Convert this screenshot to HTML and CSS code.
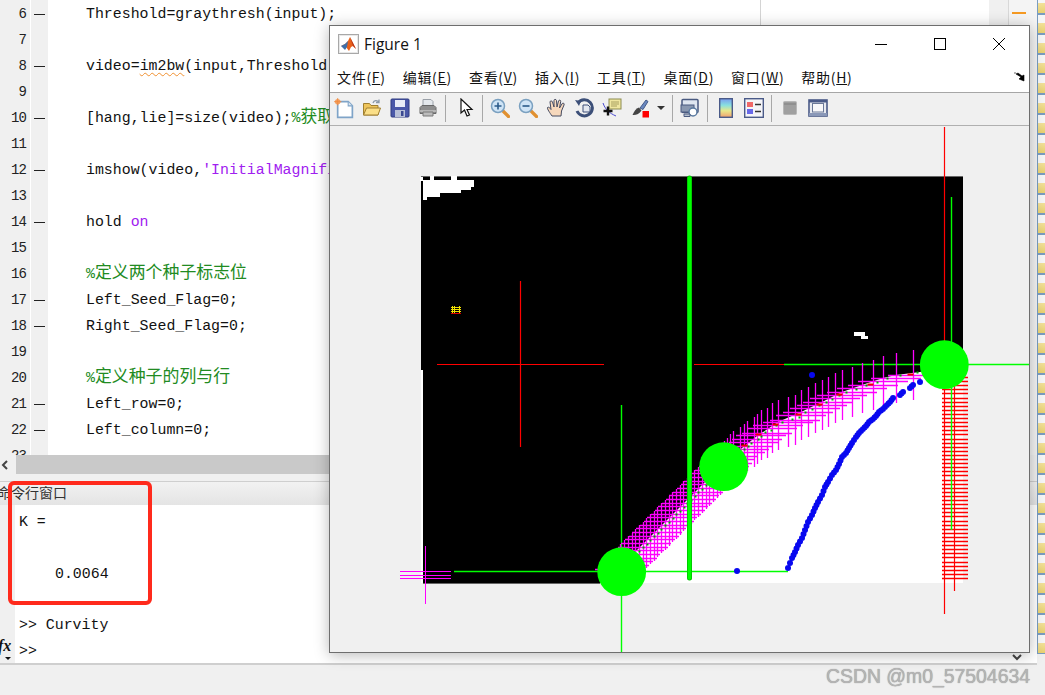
FILE: index.html
```html
<!DOCTYPE html>
<html lang="zh">
<head>
<meta charset="utf-8">
<title>Figure 1</title>
<link rel="stylesheet" href="styles.css">
</head>
<body>
<div class="desktop">
  <div class="workspace">
    <div class="editor">
      <div class="code">
        <div class="line"><span class="num">6</span><span class="mark on"></span><span class="src">Threshold=graythresh(input);</span></div>
        <div class="line"><span class="num">7</span><span class="mark"></span><span class="src"></span></div>
        <div class="line"><span class="num">8</span><span class="mark on"></span><span class="src">video=<span class="warn">im2bw</span>(input,Threshold);</span></div>
        <div class="line"><span class="num">9</span><span class="mark"></span><span class="src"></span></div>
        <div class="line"><span class="num">10</span><span class="mark on"></span><span class="src">[hang,lie]=size(video);<span class="cm">%<span class="cjk">获取</span></span></span></div>
        <div class="line"><span class="num">11</span><span class="mark"></span><span class="src"></span></div>
        <div class="line"><span class="num">12</span><span class="mark on"></span><span class="src">imshow(video,<span class="str">'InitialMagnification'</span>);</span></div>
        <div class="line"><span class="num">13</span><span class="mark"></span><span class="src"></span></div>
        <div class="line"><span class="num">14</span><span class="mark on"></span><span class="src">hold <span class="str">on</span></span></div>
        <div class="line"><span class="num">15</span><span class="mark"></span><span class="src"></span></div>
        <div class="line"><span class="num">16</span><span class="mark"></span><span class="src cm">%<span class="cjk">定义两个种子标志位</span></span></div>
        <div class="line"><span class="num">17</span><span class="mark on"></span><span class="src">Left_Seed_Flag=0;</span></div>
        <div class="line"><span class="num">18</span><span class="mark on"></span><span class="src">Right_Seed_Flag=0;</span></div>
        <div class="line"><span class="num">19</span><span class="mark"></span><span class="src"></span></div>
        <div class="line"><span class="num">20</span><span class="mark"></span><span class="src cm">%<span class="cjk">定义种子的列与行</span></span></div>
        <div class="line"><span class="num">21</span><span class="mark on"></span><span class="src">Left_row=0;</span></div>
        <div class="line"><span class="num">22</span><span class="mark on"></span><span class="src">Left_column=0;</span></div>
        <div class="line"><span class="num">23</span><span class="mark"></span><span class="src"></span></div>
      </div>
      <div class="split"></div>
      <div class="overview"></div>
      <div class="overview2"></div>
    </div>
    <div class="hscroll"><span class="arrow-cell"><svg width="10" height="12" viewBox="0 0 10 12"><path d="M7 2 3 6l4 4" fill="none" stroke="#444" stroke-width="2"/></svg></span><span class="thumb"></span></div>
    <div class="cmd-title"><span class="cmd-name">命令行窗口</span></div>
    <div class="cmd-body">
      <div class="fx-col"><span class="fx">fx</span><span class="fx-caret"></span></div>
      <div class="cmd-text">
        <div class="cmd-line">K =</div>
        <div class="cmd-line"></div>
        <div class="cmd-line indent">0.0064</div>
        <div class="cmd-line"></div>
        <div class="cmd-line">&gt;&gt; Curvity</div>
        <div class="cmd-line">&gt;&gt;</div>
      </div>
    </div>
    <div class="status"></div>
  </div>

  <div class="file-strip">
    <i></i><i></i><i></i><i></i><i></i><i></i><i></i><i></i><i></i><i></i><i></i><i></i><i></i><i></i><i></i><i></i><i></i><i></i><i></i><i></i><i></i><i></i><i></i><i></i><i></i><i></i><i></i><i></i><i></i><i></i><i></i><i></i><i></i>
  </div>

  <svg class="chevron" width="10" height="7" viewBox="0 0 10 7"><path d="M1 1l4 4 4-4" fill="none" stroke="#444" stroke-width="2"/></svg>

  <div class="callout"></div>

  <section class="figure">
    <header class="titlebar">
      <svg class="app-icon" width="21" height="20" viewBox="0 0 21 20">
        <rect x=".5" y=".5" width="20" height="19" fill="#e8e8e8" stroke="#a8a8a8"/>
        <rect x="2" y="2" width="17" height="16" fill="#fff"/>
        <path d="M3 12l4-2 3-3 2-4 3 6 3 6-3-3-2 1-2 4-3-4z" fill="#e8601a"/>
        <path d="M3 12l4-2 3-3-1 6-2 3z" fill="#3f6fa8"/>
        <path d="M12 3l3 6 3 6-3-3z" fill="#b8321a"/>
      </svg>
      <span class="title-text">Figure 1</span>
      <div class="win-controls">
        <svg width="14" height="14" viewBox="0 0 14 14"><path d="M1 7.500h12" stroke="#000"/></svg>
        <svg width="14" height="14" viewBox="0 0 14 14"><rect x="1.500" y="1.500" width="11" height="11" fill="none" stroke="#000"/></svg>
        <svg width="14" height="14" viewBox="0 0 14 14"><path d="M1 1l12 12M13 1 1 13" stroke="#000" fill="none"/></svg>
      </div>
    </header>
    <nav class="menubar">
      <span class="menu">文件(<u>F</u>)</span>
      <span class="menu">编辑(<u>E</u>)</span>
      <span class="menu">查看(<u>V</u>)</span>
      <span class="menu">插入(<u>I</u>)</span>
      <span class="menu">工具(<u>T</u>)</span>
      <span class="menu">桌面(<u>D</u>)</span>
      <span class="menu">窗口(<u>W</u>)</span>
      <span class="menu">帮助(<u>H</u>)</span>
      <svg class="dock" width="12" height="10" viewBox="0 0 12 10"><path d="M1 1h2M3 2l5 3-2 2 5 2V3L9 4 5 1z" fill="#000" stroke="#000" stroke-width=".6"/></svg>
    </nav>
    <div class="toolbar">
      <span class="tool"><svg width="21" height="21" viewBox="0 0 20 20"><path d="M3.500 3.500h10l4 4v11h-14z" fill="#fff" stroke="#7fa4c8" stroke-width="1.600"/><path d="M13.500 3.500v4h4" fill="#dde8f2" stroke="#7fa4c8"/><circle cx="3.500" cy="3.500" r="2.600" fill="#f4a060"/><path d="M0 3.500h7M3.500 0v7" stroke="#f08a40" stroke-width=".8"/></svg></span>
      <span class="tool"><svg width="20" height="20" viewBox="0 0 20 20"><path d="M1.500 17V5.500h6l1.500 2h7v9.500z" fill="#eec45a" stroke="#a07f30"/><path d="M1.500 17l3-7h14l-2.500 7z" fill="#fbdf88" stroke="#a07f30"/><path d="M11 5c1-3 4-3 6-1M17 1.500v3h-3" fill="none" stroke="#8a98a8" stroke-width="1.300"/></svg></span>
      <span class="tool"><svg width="20" height="20" viewBox="0 0 20 20"><rect x="1" y="1" width="18" height="18" rx="1" fill="#4a58a8" stroke="#2e3a80"/><rect x="5" y="2" width="10" height="7" fill="#e8ecf6"/><rect x="5" y="12" width="10" height="7" fill="#b8c0d8"/><rect x="11" y="13" width="2.500" height="5" fill="#3a4890"/></svg></span>
      <span class="tool"><svg width="20" height="20" viewBox="0 0 20 20"><path d="M5 8V1.500h8l2 2V8z" fill="#e4e8ec" stroke="#9aa0a8"/><path d="M2 9.500 4 7.500h12l2 2v6H2z" fill="#8e8e8e" stroke="#686868"/><path d="M2 13h16" stroke="#c4c4c4" stroke-width="1.500"/><path d="M5 14h10v4H5z" fill="#bcbcbc" stroke="#787878"/></svg></span>
      <span class="sep first"></span>
      <span class="tool"><svg width="20" height="20" viewBox="0 0 20 20"><path d="M5 1v14l3.500-3 2.500 6 2.500-1-2.500-5.500H16z" fill="#fff" stroke="#111" stroke-width="1.200"/></svg></span>
      <span class="sep second"></span>
      <span class="tool"><svg width="20" height="20" viewBox="0 0 20 20"><path d="M12 12l6.500 6.500" stroke="#e09030" stroke-width="3.200" stroke-linecap="round"/><circle cx="8" cy="8" r="6.500" fill="#cfe4f6" stroke="#7aa0c0" stroke-width="1.500"/><path d="M4.500 8h7M8 4.500v7" stroke="#2a5a8a" stroke-width="1.600"/></svg></span>
      <span class="tool"><svg width="20" height="20" viewBox="0 0 20 20"><path d="M12 12l6.500 6.500" stroke="#e09030" stroke-width="3.200" stroke-linecap="round"/><circle cx="8" cy="8" r="6.500" fill="#cfe4f6" stroke="#7aa0c0" stroke-width="1.500"/><path d="M4.500 8h7" stroke="#2a5a8a" stroke-width="1.600"/></svg></span>
      <span class="tool"><svg width="21" height="20" viewBox="0 0 21 20"><path d="M6 18C4 15 1 11 1.500 9.500c1-1 2.500.5 3.500 2L4 4c0-1.500 2-1.500 2.500 0L8 9 8 2.500c0-1.500 2.200-1.500 2.500 0L11 9l1.500-6c.5-1.500 2.500-1 2.200.5L13.500 10l2.700-4.500c1-1 2.500 0 1.800 1.500l-2.500 6-.5 5z" fill="#f6d8bc" stroke="#444a60"/></svg></span>
      <span class="tool"><svg width="21" height="20" viewBox="0 0 21 20"><path d="M4 5a8 8 0 1 1-1 8" fill="none" stroke="#3c4f78" stroke-width="3"/><path d="M1 2l6 1-2 5z" fill="#3c4f78"/><path d="M9 7h5l2 2v5H9z" fill="#e4e8f0" stroke="#3c4f78"/></svg></span>
      <span class="tool"><svg width="20" height="20" viewBox="0 0 20 20"><rect x="7" y="1" width="12" height="10" fill="#efe6a0" stroke="#8c8c50"/><path d="M9 4h8M9 6h8M9 8h6" stroke="#a8a060"/><path d="M1 5c2 6 6 10 13 13" fill="none" stroke="#4848d0"/><path d="M1.500 13h9M6 8.500v9" stroke="#111" stroke-width="2.400"/></svg></span>
      <span class="tool"><svg width="20" height="20" viewBox="0 0 20 20"><path d="M10 10 16 2l2 1.500-5 8z" fill="#6a88c0" stroke="#445a88"/><path d="M9 9.500c-3 1-5 4-6.500 7.500 3 .5 7-1 9-4.500z" fill="#444"/><rect x="12.500" y="13" width="6.500" height="6.500" fill="#f00"/></svg></span>
      <span class="caret"></span>
      <span class="sep third"></span>
      <span class="tool"><svg width="20" height="20" viewBox="0 0 20 20"><rect x="2" y="1.500" width="16" height="13" rx="1" fill="#dfe6f0" stroke="#4a5a80" stroke-width="1.500"/><rect x="1" y="7" width="13" height="7" fill="#8a98b0" stroke="#4a5a80"/><circle cx="13" cy="14" r="4" fill="#fff" stroke="#5a7aa0" stroke-width="1.500"/><path d="M4 16h6v2.500H4z" fill="#b8c2d0" stroke="#4a5a80"/></svg></span>
      <span class="sep fourth"></span>
      <span class="tool"><svg width="14" height="20" viewBox="0 0 14 20"><defs><linearGradient id="cb" x1="0" y1="0" x2="0" y2="1"><stop offset="0" stop-color="#7a9cf0"/><stop offset=".35" stop-color="#88e0e0"/><stop offset=".65" stop-color="#e8e88a"/><stop offset="1" stop-color="#f0a070"/></linearGradient></defs><rect x=".7" y=".7" width="12.600" height="18.600" fill="url(#cb)" stroke="#4a5a88" stroke-width="1.400"/></svg></span>
      <span class="tool"><svg width="20" height="20" viewBox="0 0 20 20"><rect x=".7" y=".7" width="18.600" height="18.600" fill="#f4f4f8" stroke="#4a5a88" stroke-width="1.400"/><rect x="3" y="4" width="6" height="5" fill="#f06868"/><rect x="3" y="11" width="6" height="5" fill="#6868e8"/><path d="M11 6.500h6M11 13.500h6" stroke="#333" stroke-width="1.400"/></svg></span>
      <span class="sep fifth"></span>
      <span class="tool"><svg width="14" height="14" viewBox="0 0 14 14"><rect x=".5" y=".5" width="13" height="13" rx="1" fill="#a0a0a0" stroke="#b8b8b8"/><path d="M1 3h12" stroke="#808080"/></svg></span>
      <span class="tool"><svg width="20" height="18" viewBox="0 0 20 18"><rect x="1" y="1" width="18" height="16" fill="#e8eaf0" stroke="#4a5a88" stroke-width="1.600"/><rect x="1" y="1" width="18" height="2.500" fill="#4a5a88"/><rect x="4.500" y="4.500" width="11" height="8.500" fill="#f8f8fa" stroke="#6a7898"/><rect x="1" y="14" width="18" height="3" fill="#8a98b8"/></svg></span>
    </div>
    <div class="canvas">
      <svg class="plot" width="699" height="526" viewBox="330 126 699 526">
        <rect x="421" y="177" width="542" height="406" fill="#fff"/>
        <path d="M421 177H963V360L920 372 896 375 883 378 862 385 842 392 822 402 801 412 778 422 757 436 727 460 621 566 600 583H423V370H421Z" fill="#000"/>
        <path d="M421 176.500H963" stroke="#666" shape-rendering="crispEdges"/>
        <path d="M423 583.500H600" stroke="#666" shape-rendering="crispEdges"/>
        <path d="M420 177h3v4h-3zM430 176h4v4h-4zM451 176h6v4h-6zM423 180H474V187H471V190H461V193H440V197H427V200H423ZM854 332H865V336H868V339H861V336H854Z" fill="#fff"/>
        <path d="M452.500 306V313M454.500 306V313M459.500 306V313M451 307.500H461M451 309.500H461M451 311.500H461" stroke="#f0e000" fill="none" shape-rendering="crispEdges"/>
        <path d="M451 313.500H461" stroke="#d00" shape-rendering="crispEdges"/>
        <path d="M437 364.500H604M520.500 281V447M694 364.500H784M944.500 127V614M954.500 350V591" stroke="#f00" stroke-width="1.200" fill="none"/>
        <path id="redRungs" stroke="#f00" stroke-width="1.300" fill="none"/>
        <path d="M784 364.500H1029M951.500 197V530M454 571.500H788M621.500 405V652" stroke="#0f0" stroke-width="1.400" fill="none"/>
        <path id="crosses" stroke="#f0f" stroke-width="1.300" fill="none"/>
        <path d="M425.500 546V604M400 571.500H451M400 575.500H451M400 578.500H451" stroke="#f0f" fill="none" shape-rendering="crispEdges"/>
        <path id="edgeMarks" fill="none" stroke="#0a0" stroke-width="2"/>
        <path id="edgeRed" fill="none" stroke="#e00" stroke-width="2"/>
        <path d="M689.500 178V578" stroke="#0b0" stroke-width="5" stroke-linecap="round"/>
        <path d="M689.500 178V578" stroke="#0f0" stroke-width="3.600" stroke-linecap="round"/>
        <path id="dots" fill="none" stroke="#0808f0" stroke-width="6" stroke-linecap="round"/>
        <circle cx="621.700" cy="571.700" r="24.400" fill="#0f0"/>
        <circle cx="723.700" cy="466.700" r="24.400" fill="#0f0"/>
        <circle cx="944.300" cy="364.700" r="24.400" fill="#0f0"/>
      </svg>
    </div>
  </section>

  <div class="watermark">CSDN @m0_57504634</div>
</div>
<script src="plot.js"></script>
</body>
</html>
```

FILE: styles.css
```css
* { box-sizing: border-box; }
html, body { margin: 0; padding: 0; }
body { background: #f0f0f0; overflow: hidden; }

.desktop {
  position: relative;
  width: 1045px;
  height: 695px;
  overflow: hidden;
  background: #f0f0f0;
}

.workspace {
  width: 1037px;
  height: 695px;
  display: flex;
  flex-direction: column;
}

/* editor */
.editor {
  height: 455px;
  display: flex;
  overflow: hidden;
  background: #fff;
  flex: none;
}
.code { width: 760px; height: 455px; overflow: hidden; flex: none; }
.line {
  display: flex;
  height: 26px;
  line-height: 28px;
  font-family: "Liberation Mono", "Noto Sans CJK SC", monospace;
  font-size: 14.9px;
  color: #111;
  white-space: nowrap;
}
.num {
  width: 30px;
  flex: none;
  background: #f0f0f0;
  padding-right: 4px;
  text-align: right;
  font-size: 14px;
  letter-spacing: -0.9px;
  color: #222;
}
.mark {
  width: 18px;
  flex: none;
  background: #f0f0f0;
  border-left: 1px solid #fff;
  position: relative;
}
.mark.on::after {
  content: "";
  position: absolute;
  left: 3px;
  right: 3px;
  top: 14px;
  height: 1px;
  background: #222;
}
.src { padding-left: 38px; }
.warn { text-decoration: underline wavy #f09030 1px; text-underline-offset: 2px; }
.str { color: #a020f0; }
.cm { color: #228b22; }
.cjk { font-family: "Noto Sans CJK SC", sans-serif; font-size: 16.9px; line-height: 1; }
.split { width: 1px; height: 25px; background: #d4d4d4; flex: none; }
.overview {
  margin-left: 228px;
  width: 20px;
  background: #f0f0f0;
  border-right: 1px solid #d8d8d8;
  flex: none;
}
.overview2 {
  flex: 1;
  background: #f4f4f4;
  position: relative;
}
.overview2::before {
  content: "";
  position: absolute;
  left: 3px;
  top: 12px;
  width: 14px;
  height: 2px;
  background: #f59a23;
}

/* horizontal scrollbar */
.hscroll {
  height: 27px;
  flex: none;
  display: flex;
  align-items: flex-start;
  background: #f0f0f0;
  border-bottom: 1px solid #cfcfcf;
}
.arrow-cell {
  width: 16px;
  height: 19px;
  display: flex;
  align-items: center;
  flex: none;
}
.thumb { flex: 1; height: 19px; background: #c9c9c9; margin-right: 28px; }

/* command window */
.cmd-title {
  height: 23px;
  flex: none;
  overflow: hidden;
  background: linear-gradient(#f2f2f2, #e4e4e4);
}
.cmd-name {
  display: block;
  margin-left: -3px;
  font: 14px/21px "Noto Sans CJK SC", sans-serif;
  color: #333;
}
.cmd-body {
  height: 160px;
  flex: none;
  display: flex;
  border-bottom: 2px solid #cfcfcf;
  background: #fff;
}
.fx-col {
  width: 15px;
  flex: none;
  background: #f0f0f0;
  position: relative;
}
.fx {
  position: absolute;
  left: -2px;
  top: 132px;
  font: italic bold 16px/18px "Liberation Serif", serif;
  color: #111;
}
.fx-caret {
  position: absolute;
  left: 5px;
  top: 152px;
  border: 3px solid transparent;
  border-top: 3px solid #111;
}
.cmd-text {
  flex: 1;
  padding: 5px 0 0 4px;
  font: 14.9px/25.8px "Liberation Mono", monospace;
  color: #111;
}
.cmd-line { height: 25.8px; white-space: pre; }
.cmd-line.indent { padding-left: 36px; }
.status { flex: 1; background: #f0f0f0; }

/* file icon strip at the right edge */
.file-strip {
  position: absolute;
  left: 1037px;
  top: -6px;
  width: 8px;
  height: 670px;
  overflow: hidden;
  display: flex;
  flex-direction: column;
}
.file-strip i {
  display: block;
  flex: none;
  height: 20px;
  border: 1px solid #7a9cc0;
  border-right: 0;
  background: linear-gradient(#f6f6f6 0, #f6f6f6 45%, #f2e19a 45%, #e8d070 100%);
}

.chevron { position: absolute; left: 1012px; top: 654px; }

.callout {
  position: absolute;
  left: 8px;
  top: 481px;
  width: 144px;
  height: 124px;
  border: 4px solid #ff2a1c;
  border-radius: 6px;
}

/* figure window */
.figure {
  position: absolute;
  left: 329px;
  top: 25px;
  width: 701px;
  height: 628px;
  display: flex;
  flex-direction: column;
  background: #fff;
  border: 1px solid #6e6e6e;
  box-shadow: 0 2px 14px rgba(0, 0, 0, .28);
}
.titlebar {
  height: 36px;
  flex: none;
  display: flex;
  align-items: center;
  padding-left: 8px;
  background: #fff;
}
.app-icon { flex: none; }
.title-text {
  margin-left: 5px;
  font: 15.500px/20px "Open Sans", "Liberation Sans", sans-serif;
  color: #111;
}
.win-controls {
  margin-left: auto;
  display: flex;
  gap: 45px;
  padding-right: 23px;
}
.menubar {
  height: 31px;
  flex: none;
  display: flex;
  align-items: center;
  gap: 17px;
  padding-left: 7px;
  background: #fff;
  border-bottom: 1px solid #a6a6a6;
  font: 14px/20px "Noto Sans CJK SC", "Liberation Sans", sans-serif;
  letter-spacing: .7px;
  color: #111;
  position: relative;
}
.menu { white-space: nowrap; }
.dock { position: absolute; right: 4px; top: 10px; }
.toolbar {
  height: 33px;
  flex: none;
  display: flex;
  align-items: center;
  background: #f0f0f0;
  border-bottom: 1px solid #b0b0b0;
  padding-bottom: 2px;
}
.tool {
  width: 28px;
  height: 24px;
  flex: none;
  display: flex;
  align-items: center;
  justify-content: center;
}
.sep { width: 1px; height: 27px; background: #a8a8a8; flex: none; }
.sep.first { margin: 0 6px 0 3px; }
.sep.second { margin: 0 3px 0 2px; }
.sep.third { margin: 0 3px 0 7px; }
.sep.fourth { margin: 0 4px 0 3px; }
.sep.fifth { margin: 0 4px 0 3px; }
.caret {
  width: 0;
  height: 0;
  margin-left: 3px;
  border: 4px solid transparent;
  border-top: 4px solid #333;
  transform: translateY(2px);
  flex: none;
}
.canvas { flex: 1; background: #f0f0f0; overflow: hidden; }
.plot { display: block; }

.watermark {
  position: absolute;
  right: 15px;
  top: 664px;
  font: 19.400px/24px "Liberation Sans", sans-serif;
  color: #b4b4b4;
  text-shadow: 0 0 1px #8a8a8a;
  white-space: nowrap;
}
```

FILE: plot.js
```js
// Boundary pixels of the detected edge, and the fitted blue curve, in page pixels.
var upper = [[913,375],[896,378],[883,381],[873,385],[862,388],[852,392],[842,395],[835,398],[828,402],[822,405],[815,408],[808,412],[801,415],[795,420],[788,422],[778,425],[772,428],[767,433],[761,435],[757,439],[754,442],[747,446],[744,449],[740,452],[733,456],[730,459],[727,463]];
var curve = [[788,568],[792,558],[795,552],[798,545],[802,538],[805,530],[808,522],[812,515],[815,508],[818,502],[822,495],[825,487],[828,482],[832,475],[836,470],[839,464],[842,457],[846,453],[849,448],[852,443],[856,437],[859,433],[863,429],[866,426],[869,422],[873,419],[876,416],[879,412],[883,409],[887,405],[890,402],[893,398],[900,395],[903,392],[910,388],[913,385],[920,382]];
var single = [[812,375],[737,571]];

var centers = upper.slice();
for (var i = 0; i <= 28; i++) {
  centers.push([Math.round(724 - i * 3.7), Math.round(466 + i * 3.67)]);
}

var cross = "", green = "", red = "";
centers.forEach(function (p, i) {
  var x = p[0] + 0.5, y = p[1] + 0.5;
  cross += "M" + (p[0] - 25) + " " + y + "h50M" + x + " " + (p[1] - 25) + "v50";
  green += "M" + (x + 3) + " " + (y - 3) + "h2";
  if (i < 27 && i % 3 === 0) { red += "M" + (x - 6) + " " + (y - 1) + "h6"; }
});
document.getElementById("crosses").setAttribute("d", cross);
document.getElementById("edgeMarks").setAttribute("d", green);
document.getElementById("edgeRed").setAttribute("d", red);

var rungs = "";
for (var y = 377; y <= 578; y += 4.1) {
  rungs += "M942 " + (Math.round(y) + 0.5) + "H968";
}
document.getElementById("redRungs").setAttribute("d", rungs);

var d = "";
curve.forEach(function (p, i) {
  d += "M" + p[0] + " " + p[1] + "h.01";
  var n = curve[i + 1];
  if (n && n[0] - p[0] < 5) {
    d += "M" + (p[0] + n[0]) / 2 + " " + (p[1] + n[1]) / 2 + "h.01";
  }
});
single.forEach(function (p) { d += "M" + p[0] + " " + p[1] + "h.01"; });
document.getElementById("dots").setAttribute("d", d);
```
